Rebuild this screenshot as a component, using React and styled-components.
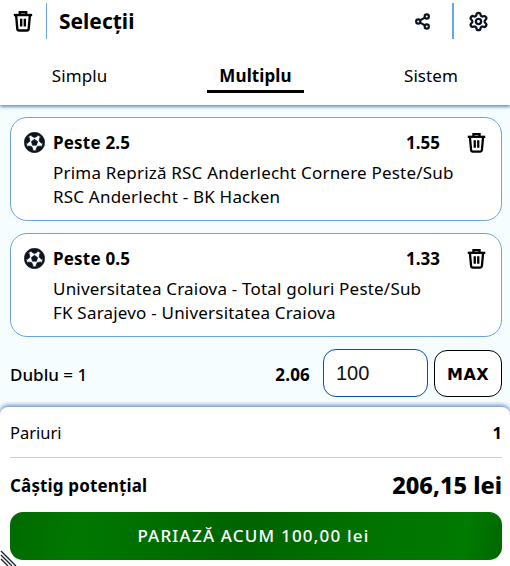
import styled, { createGlobalStyle } from 'styled-components';
import { FaFutbol } from 'react-icons/fa';
import { Share2, Settings } from 'lucide-react';

const GlobalStyle = createGlobalStyle`
  html, body {
    margin: 0;
    padding: 0;
    background: #f6fdff;
  }
  * {
    box-sizing: border-box;
  }
`;

const Page = styled.div`
  position: relative;
  width: 510px;
  height: 566px;
  overflow: hidden;
  display: flex;
  flex-direction: column;
  font-family: 'Noto Sans', 'Open Sans', sans-serif;
  color: #000;
  background: #f6fdff;
`;

const TopPanel = styled.div`
  background: #fff;
  height: 105px;
  box-shadow: 0 2px 3px rgba(60, 110, 170, 0.75);
`;

const Header = styled.div`
  display: flex;
  align-items: flex-start;
  height: 39px;
  margin-top: 3px;
`;

const HeaderIcon = styled.div`
  width: ${({ $w }) => $w}px;
  height: 36px;
  display: flex;
  align-items: center;
  justify-content: center;
  color: #0b1320;
`;

const Divider = styled.div`
  width: ${({ $w }) => $w}px;
  height: 36px;
  background: #64a6e6;
`;

const Title = styled.div`
  flex: 1;
  padding-left: 12px;
  font-size: 21px;
  font-weight: 700;
  line-height: 37px;
`;

const Tabs = styled.div`
  display: grid;
  grid-template-columns: 79px 97px 78px;
  justify-content: space-between;
  padding: 0 40px;
  margin-top: 13px;
`;

const Tab = styled.div`
  height: 38px;
  text-align: center;
  font-size: 17px;
  line-height: 42px;
  letter-spacing: 0.1px;
  font-weight: ${({ $active }) => ($active ? 700 : 400)};
  border-bottom: 3px solid ${({ $active }) => ($active ? '#000' : 'transparent')};
`;

const Content = styled.div`
  flex: 1;
  padding: 12px 8px 0 10px;
  display: flex;
  flex-direction: column;
  gap: 12px;
`;

const Card = styled.div`
  height: 104px;
  background: #fff;
  border: 1px solid #6da3dc;
  border-radius: 17px;
  padding: 11px 14px 0 13px;
`;

const CardTop = styled.div`
  display: flex;
  align-items: center;
  height: 26px;
`;

const Ball = styled(FaFutbol)`
  width: 21px;
  height: 21px;
  color: #0b1320;
  stroke: #0b1320;
  stroke-width: 14;
  margin-right: 8px;
`;

const Market = styled.div`
  flex: 1;
  font-size: 17px;
  font-weight: 700;
  letter-spacing: 0.2px;
`;

const Odds = styled.div`
  font-size: 17px;
  font-weight: 700;
  margin-right: 26px;
`;

const CardText = styled.div`
  margin: 6px 0 0 29px;
  font-size: 17px;
  line-height: 24px;
  letter-spacing: 0.2px;
  white-space: nowrap;
`;

const StakeRow = styled.div`
  display: flex;
  align-items: center;
  height: 48px;
`;

const StakeLabel = styled.div`
  flex: 1;
  font-size: 17px;
  font-weight: 500;
  padding-top: 2px;
`;

const Total = styled.div`
  font-size: 17px;
  font-weight: 700;
  letter-spacing: 0.2px;
  margin-right: 13px;
  padding-top: 2px;
`;

const StakeInput = styled.div`
  width: 105px;
  height: 48px;
  border: 1px solid #0f4ea0;
  border-radius: 13px;
  background: #fff;
  padding-left: 12px;
  font-family: 'Liberation Sans', sans-serif;
  font-size: 20px;
  line-height: 46px;
  color: #111;
`;

const MaxButton = styled.div`
  width: 68px;
  height: 47px;
  margin-left: 6px;
  margin-top: 1px;
  border: 1px solid #000;
  border-radius: 13px;
  background: #fff;
  text-align: center;
  font-family: 'DejaVu Sans', sans-serif;
  font-size: 16px;
  font-weight: 700;
  line-height: 47px;
  letter-spacing: 0.4px;
`;

const Footer = styled.div`
  height: 159px;
  background: #fff;
  border-radius: 8px 8px 0 0;
  box-shadow: 0 -2px 4px rgba(60, 110, 170, 0.75);
  padding: 0 8px 0 10px;
`;

const Bets = styled.div`
  display: flex;
  justify-content: space-between;
  align-items: center;
  height: 51px;
  border-bottom: 1px solid #bcd4e0;
  font-size: 16.5px;
`;

const BetsCount = styled.span`
  font-weight: 700;
`;

const Winnings = styled.div`
  display: flex;
  justify-content: space-between;
  align-items: center;
  height: 54px;
`;

const WinLabel = styled.div`
  font-size: 17px;
  font-weight: 700;
  letter-spacing: 0.15px;
`;

const WinValue = styled.div`
  font-size: 23.5px;
  font-weight: 800;
`;

const PlaceBet = styled.div`
  height: 48px;
  padding-right: 5px;
  border-radius: 13px;
  background: linear-gradient(100deg, #006a00 0%, #007800 14%, #006400 48%, #007400 75%, #007a00 92%, #006800 100%);
  color: #fff;
  text-align: center;
  font-size: 17px;
  font-weight: 500;
  line-height: 48px;
  letter-spacing: 1.2px;
`;

const ResizeGrip = styled.svg`
  position: absolute;
  left: 0;
  bottom: 0;
  width: 18px;
  height: 16px;
`;

function TrashIcon({ size = 22 }) {
  return (
    <svg width={size} height={size} viewBox="0 0 24 24" fill="none" stroke="#000" strokeWidth="2.6">
      <path d="M2 5.5h20" />
      <path d="M8.5 5V2.5h7V5" />
      <path d="M4.5 6l1.3 14.5q.2 1.8 2 1.8h8.4q1.8 0 2-1.8L19.5 6" />
      <path d="M10 9.5v8.5M14 9.5v8.5" />
    </svg>
  );
}

const bets = [
  {
    market: 'Peste 2.5',
    odds: '1.55',
    line: 'Prima Repriză RSC Anderlecht Cornere Peste/Sub',
    game: 'RSC Anderlecht - BK Hacken',
  },
  {
    market: 'Peste 0.5',
    odds: '1.33',
    line: 'Universitatea Craiova - Total goluri Peste/Sub',
    game: 'FK Sarajevo - Universitatea Craiova',
  },
];

export default function App() {
  return (
    <Page>
      <GlobalStyle />
      <TopPanel>
        <Header>
          <HeaderIcon $w={46}>
            <TrashIcon />
          </HeaderIcon>
          <Divider $w={1} />
          <Title>Selecții</Title>
          <HeaderIcon $w={34}>
            <Share2 size={17} strokeWidth={3} />
          </HeaderIcon>
          <HeaderIcon $w={13} />
          <Divider $w={2} />
          <HeaderIcon $w={48}>
            <Settings size={21} strokeWidth={2.6} />
          </HeaderIcon>
          <HeaderIcon $w={8} />
        </Header>
        <Tabs>
          <Tab>Simplu</Tab>
          <Tab $active>Multiplu</Tab>
          <Tab>Sistem</Tab>
        </Tabs>
      </TopPanel>
      <Content>
        {bets.map((bet) => (
          <Card key={bet.market}>
            <CardTop>
              <Ball />
              <Market>{bet.market}</Market>
              <Odds>{bet.odds}</Odds>
              <TrashIcon size={21} />
            </CardTop>
            <CardText>
              {bet.line}
              <br />
              {bet.game}
            </CardText>
          </Card>
        ))}
        <StakeRow>
          <StakeLabel>Dublu = 1</StakeLabel>
          <Total>2.06</Total>
          <StakeInput>100</StakeInput>
          <MaxButton>MAX</MaxButton>
        </StakeRow>
      </Content>
      <Footer>
        <Bets>
          <span>Pariuri</span>
          <BetsCount>1</BetsCount>
        </Bets>
        <Winnings>
          <WinLabel>Câștig potențial</WinLabel>
          <WinValue>206,15 lei</WinValue>
        </Winnings>
        <PlaceBet>PARIAZĂ ACUM 100,00 lei</PlaceBet>
      </Footer>
      <ResizeGrip viewBox="0 0 18 16" fill="none" stroke="#1a2230" strokeWidth="1.4">
        <path d="M1 1l15 15M1 5l11 11M1 9l7 7" />
      </ResizeGrip>
    </Page>
  );
}
